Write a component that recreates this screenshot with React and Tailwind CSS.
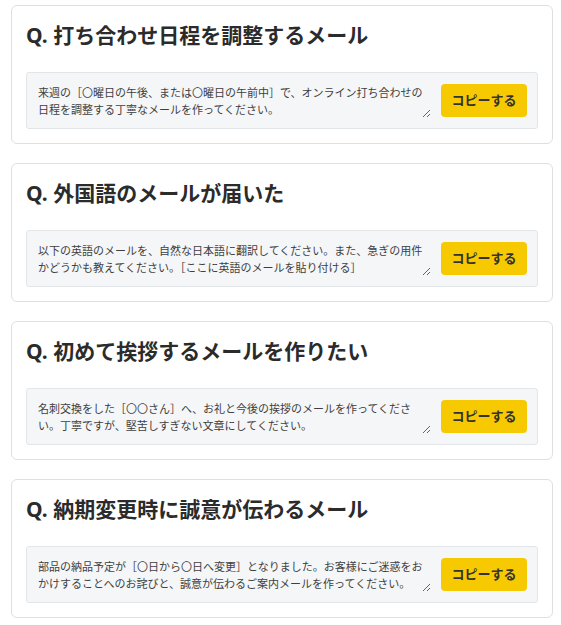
const items = [
  {
    title: "Q. 打ち合わせ日程を調整するメール",
    prompt:
      "来週の［〇曜日の午後、または〇曜日の午前中］で、オンライン打ち合わせの日程を調整する丁寧なメールを作ってください。",
  },
  {
    title: "Q. 外国語のメールが届いた",
    prompt:
      "以下の英語のメールを、自然な日本語に翻訳してください。また、急ぎの用件かどうかも教えてください。［ここに英語のメールを貼り付ける］",
  },
  {
    title: "Q. 初めて挨拶するメールを作りたい",
    prompt:
      "名刺交換をした［〇〇さん］へ、お礼と今後の挨拶のメールを作ってください。丁寧ですが、堅苦しすぎない文章にしてください。",
  },
  {
    title: "Q. 納期変更時に誠意が伝わるメール",
    prompt:
      "部品の納品予定が［〇日から〇日へ変更］となりました。お客様にご迷惑をおかけすることへのお詫びと、誠意が伝わるご案内メールを作ってください。",
  },
];

function PromptCard({ title, prompt }) {
  return (
    <div className="bg-white border border-[#dfdfdf] rounded-[6px] px-[14px] py-[14px]">
      <h2 className="text-[21px] leading-[30px] font-bold text-[#2b2b2b]">
        {title}
      </h2>
      <div className="mt-[22px] h-[57px] flex items-center gap-[10px] bg-[#f4f6f8] border border-[#e3e6e9] rounded-[3px] pl-[11px] pr-[10px]">
        <textarea
          readOnly
          defaultValue={prompt}
          className="w-[394px] h-[35px] pt-[1px] bg-transparent text-[11px] leading-[17px] text-[#3f3f3f] outline-none border-none"
          style={{ resize: "vertical", overflow: "hidden" }}
        />
        <button className="w-[86px] h-[33px] rounded-[4px] bg-[#f6c900] text-[13px] font-semibold text-[#333]">
          コピーする
        </button>
      </div>
    </div>
  );
}

export default function App() {
  return (
    <div
      className="bg-white min-h-screen pt-[5px] pl-[11px] w-[553px] flex flex-col gap-[19px]"
      style={{ fontFamily: '"Noto Sans", "Noto Sans CJK JP", sans-serif' }}
    >
      {items.map((it) => (
        <PromptCard key={it.title} {...it} />
      ))}
    </div>
  );
}
